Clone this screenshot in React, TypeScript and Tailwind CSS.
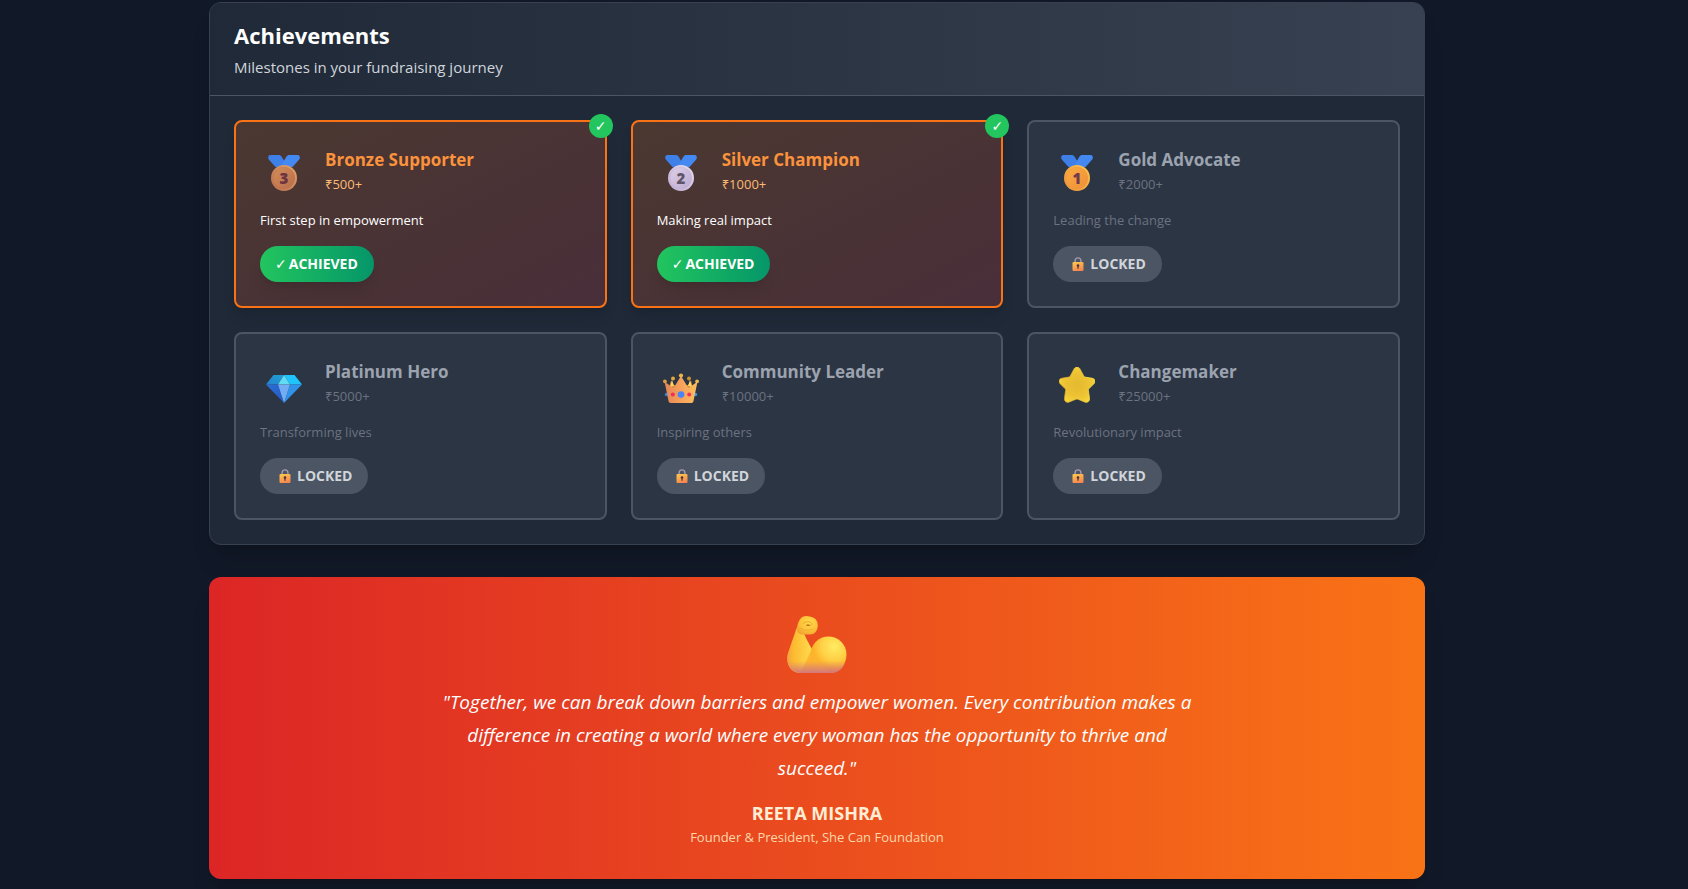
import type { ReactNode } from "react";

function Medal({ id, digit, rim, face, shade, ink }: { id: string; digit: string; rim: string; face: string; shade: string; ink: string }) {
  return (
    <svg viewBox="0 0 36 36" className="size-9" aria-hidden="true">
      <defs>
        <linearGradient id={id + "-face"} x1="0" y1="0" x2="1" y2="1">
          <stop offset="0" stopColor={face} />
          <stop offset="1" stopColor={shade} />
        </linearGradient>
        <linearGradient id={id + "-rim"} x1="1" y1="0" x2="0" y2="1">
          <stop offset="0" stopColor={rim} />
          <stop offset="1" stopColor={shade} />
        </linearGradient>
      </defs>
      <path d="M4.500 0h8c1.300 0 2.300.5 3 1.500L21 10.500l-4 3-7.500-1.500-6.700-7.500C1.500 2.800 2.300 0 4.500 0Z" fill="#3f7fe8" />
      <path d="M31.500 0h-8c-1.300 0-2.300.5-3 1.500L15.500 10l3.500 3.500 7.500-1.500 6.700-7.500C34.500 2.800 33.700 0 31.500 0Z" fill="#4489f2" />
      <circle cx="18" cy="23" r="13" fill={`url(#${id}-rim)`} />
      <circle cx="18" cy="23" r="10.800" fill={`url(#${id}-face)`} stroke={shade} strokeOpacity=".5" strokeWidth=".8" />
      <text x="18" y="28.500" textAnchor="middle" fontFamily="Open Sans, sans-serif" fontWeight="800" fontSize="15" fill={ink}>
        {digit}
      </text>
    </svg>
  );
}

function Gem() {
  return (
    <svg viewBox="0 0 36 36" className="size-9" aria-hidden="true">
      <defs>
        <linearGradient id="gem-tl" x1="0" y1="1" x2="1" y2="0">
          <stop offset="0" stopColor="#2583cf" />
          <stop offset="1" stopColor="#1fa0d4" />
        </linearGradient>
        <linearGradient id="gem-bl" x1="0" y1="0" x2="1" y2="1">
          <stop offset="0" stopColor="#2a6fd6" />
          <stop offset="1" stopColor="#2459c4" />
        </linearGradient>
      </defs>
      <path d="M7.500 8H18l-6 9.500H0Z" fill="url(#gem-tl)" />
      <path d="M18 8h10.500L36 17.500H24Z" fill="#1fc4fb" />
      <path d="M18 8l6 9.500H12Z" fill="#62dcf3" />
      <path d="M0 17.500h12L18 36Z" fill="url(#gem-bl)" />
      <path d="M36 17.500H24L18 36Z" fill="#2f93ea" />
      <path d="M12 17.500h12L18 36Z" fill="#72acf4" />
    </svg>
  );
}

function Crown() {
  return (
    <svg viewBox="0 -4 36 36" className="size-9" aria-hidden="true">
      <defs>
        <linearGradient id="crown-body" x1="0" y1="0" x2="1" y2="0">
          <stop offset="0" stopColor="#e28455" />
          <stop offset=".5" stopColor="#f7a15c" />
          <stop offset="1" stopColor="#fcbf5c" />
        </linearGradient>
      </defs>
      <path d="M8 9.500 6 17h24l-2-7.500-3 4.500h-4L18 8l-3 6h-4Z" fill="#c98b2b" />
      <circle cx="10" cy="7.500" r="2" fill="#e3a934" />
      <circle cx="26" cy="7.500" r="2" fill="#c9932c" />
      <path d="M9 9l2 6-4 1ZM27 9l-2 6 4 1Z" fill="#ffd36a" />
      <circle cx="3.500" cy="23.500" r="1.700" fill="#2f86e8" />
      <circle cx="32.500" cy="23.500" r="1.700" fill="#2f9bf5" />
      <path d="M1.500 10.500l8 6c.6.400 1.300.2 1.700-.4L18 5l6.800 11.100c.4.600 1.100.8 1.700.4l8-6-4 19.500c-.2 1.200-1 2-2.200 2H7.700c-1.200 0-2-.8-2.200-2Z" fill="url(#crown-body)" />
      <circle cx="18" cy="4.600" r="2.100" fill="#eeb544" />
      <circle cx="1.900" cy="10.300" r="1.900" fill="#dfa03c" />
      <circle cx="34.100" cy="10.300" r="1.900" fill="#f2b94a" />
      <circle cx="18" cy="23.600" r="3.300" fill="#4a83f5" />
      <circle cx="9.800" cy="23.600" r="2" fill="#ee2f56" />
      <circle cx="26.200" cy="23.600" r="2" fill="#f2335a" />
    </svg>
  );
}

function Star() {
  return (
    <svg viewBox="0 0 36 36" className="size-9" aria-hidden="true">
      <defs>
        <radialGradient id="star-face" cx=".5" cy=".5" r=".55">
          <stop offset="0" stopColor="#e3b92f" />
          <stop offset=".6" stopColor="#edc233" />
          <stop offset="1" stopColor="#f7d53a" />
        </radialGradient>
        <linearGradient id="star-edge" x1="0" y1="0" x2="1" y2="0">
          <stop offset="0" stopColor="#d9a02c" />
          <stop offset="1" stopColor="#fdea45" />
        </linearGradient>
      </defs>
      <path
        d="M15.200 1.700c1.200-2.200 4.400-2.200 5.600 0l4 7.500c.3.500.7.800 1.300.9l7.200 1.200c2.600.4 3.600 3.300 1.900 5.100l-5.400 5.400c-.4.400-.5.900-.4 1.500l1.100 8.200c.4 2.600-2 4.600-4.500 3.600l-6.900-2.900c-.7-.3-1.500-.3-2.200 0l-6.900 2.900c-2.500 1-4.900-1-4.500-3.600l1.100-8.200c.1-.6 0-1.100-.4-1.500L.8 16.400c-1.700-1.800-.7-4.700 1.900-5.100l7.200-1.200c.6-.1 1-.4 1.300-.9Z"
        fill="url(#star-face)"
        stroke="url(#star-edge)"
        strokeWidth=".8"
      />
    </svg>
  );
}

function Lock() {
  return (
    <svg viewBox="0 0 12 14" className="h-3.5 w-3" aria-hidden="true">
      <defs>
        <linearGradient id="lock-body" x1=".3" y1="0" x2=".7" y2="1">
          <stop offset="0" stopColor="#fcc44c" />
          <stop offset="1" stopColor="#f5824f" />
        </linearGradient>
      </defs>
      <path d="M3.100 6V3.800a2.900 2.900 0 0 1 5.800 0V6" fill="none" stroke="#a59aae" strokeWidth="1.400" />
      <rect x=".5" y="5" width="11" height="9" rx="1" fill="url(#lock-body)" />
      <circle cx="6" cy="8.500" r="1.300" fill="#4b3044" />
      <path d="M5.400 9h1.200v2.700H5.400Z" fill="#4b3044" />
    </svg>
  );
}

function Biceps() {
  return (
    <svg viewBox="0 0 60 58" className="h-[58px] w-[60px]" aria-hidden="true">
      <defs>
        <linearGradient id="arm-base" x1="0" y1="0" x2="0" y2="1">
          <stop offset="0" stopColor="#fdbb2e" />
          <stop offset=".7" stopColor="#fba93a" />
          <stop offset=".88" stopColor="#f59654" />
          <stop offset="1" stopColor="#d97c78" />
        </linearGradient>
        <linearGradient id="arm-fore" x1="0" y1="0" x2="1" y2="0">
          <stop offset="0" stopColor="#f3a13f" />
          <stop offset=".25" stopColor="#fdba2f" />
          <stop offset="1" stopColor="#ffdc4f" />
        </linearGradient>
        <radialGradient id="arm-ball" cx=".66" cy=".28" r=".75">
          <stop offset="0" stopColor="#ffec62" />
          <stop offset=".5" stopColor="#ffcf45" />
          <stop offset=".85" stopColor="#fdad25" />
          <stop offset="1" stopColor="#f39b42" />
        </radialGradient>
        <radialGradient id="arm-fist" cx=".6" cy=".35" r=".7">
          <stop offset="0" stopColor="#ffd94d" />
          <stop offset=".6" stopColor="#fdc43a" />
          <stop offset="1" stopColor="#f2a432" />
        </radialGradient>
        <linearGradient id="arm-shade" x1="0" y1="0" x2="0" y2="1">
          <stop offset=".74" stopColor="#d97c78" stopOpacity="0" />
          <stop offset="1" stopColor="#d4777c" />
        </linearGradient>
      </defs>
      <path d="M10.500 14 1 38C-1.500 49 4 57 14 57h29c10 0 16-7 16-18L40 24 25 33Z" fill="url(#arm-base)" />
      <path d="M10 11 1 37C-2 48 4 57 13 57c4-5 8-12 12-23-1.800-5-5-9-7.500-15.500Z" fill="url(#arm-fore)" />
      <circle cx="41.500" cy="38.500" r="18" fill="url(#arm-ball)" />
      <path d="M24.500 33.500 42 57H13Z" fill="#fdb52f" fillOpacity=".85" />
      <path
        d="M10 11 1 37C-2 48 4 57 14 57h29c10 0 16.500-7 16.500-18.500C59.500 28.500 51 20.500 41.500 20.500c-7.500 0-14 5-16.500 12L17 18Z"
        fill="url(#arm-shade)"
      />
      <path d="M10 12C11 4.500 14 0 19.500 0c2 0 4.500.7 7 1.800 3 1.400 4.300 4.400 4.300 7.700 0 5-3 9-7.300 9H15c-3 0-5.500-2.500-5-6.500Z" fill="url(#arm-fist)" />
      <path d="M16 7.500c2-2 5-2.200 7.500-1.200 2 1 2 3-1 3.400" fill="none" stroke="#eba62c" strokeWidth="1" strokeLinecap="round" />
      <path d="M20 9.300h2" stroke="#b56b1d" strokeWidth="1.400" strokeLinecap="round" />
      <path d="M13 12c3 2.500 8 3 13 1" fill="none" stroke="#eda52e" strokeOpacity=".6" strokeWidth="1.200" strokeLinecap="round" />
    </svg>
  );
}

type Achievement = { title: string; amount: string; text: string; achieved: boolean; icon: ReactNode };

const achievements: Achievement[] = [
  {
    title: "Bronze Supporter",
    amount: "₹500+",
    text: "First step in empowerment",
    achieved: true,
    icon: <Medal id="bronze" digit="3" rim="#e6a56c" face="#d28d57" shade="#b96e4d" ink="#6b3443" />,
  },
  {
    title: "Silver Champion",
    amount: "₹1000+",
    text: "Making real impact",
    achieved: true,
    icon: <Medal id="silver" digit="2" rim="#e8dfef" face="#dccfe6" shade="#bfabd3" ink="#5f5468" />,
  },
  {
    title: "Gold Advocate",
    amount: "₹2000+",
    text: "Leading the change",
    achieved: false,
    icon: <Medal id="gold" digit="1" rim="#fcc94d" face="#fbab40" shade="#ee8f3a" ink="#713a4d" />,
  },
  { title: "Platinum Hero", amount: "₹5000+", text: "Transforming lives", achieved: false, icon: <Gem /> },
  { title: "Community Leader", amount: "₹10000+", text: "Inspiring others", achieved: false, icon: <Crown /> },
  { title: "Changemaker", amount: "₹25000+", text: "Revolutionary impact", achieved: false, icon: <Star /> },
];

function AchievementCard({ title, amount, text, achieved, icon }: Achievement) {
  return (
    <li
      className={
        achieved
          ? "relative rounded-lg border-2 border-[#f97316] bg-linear-to-br/srgb from-[#f97316]/20 to-[#ef4444]/20 p-6 shadow-lg"
          : "relative rounded-lg border-2 border-[#4b5563] bg-[#374151]/50 p-6"
      }
    >
      {achieved && (
        <span className="absolute -top-2 -right-2 flex size-6 items-center justify-center rounded-full bg-[#22c55e] font-['DejaVu_Sans'] text-sm text-white">
          ✓
        </span>
      )}
      <div className="flex items-center gap-[17px]">
        <div className="flex w-12 justify-center pt-1.5">{icon}</div>
        <div>
          <h3 className={achieved ? "text-[17px] leading-7 font-bold text-[#fb923c]" : "text-[17px] leading-7 font-bold text-[#9ca3af]"}>{title}</h3>
          <p className={achieved ? "text-[13px] leading-5 text-[#fdba74]" : "text-[13px] leading-5 text-[#6b7280]"}>{amount}</p>
        </div>
      </div>
      <p className={achieved ? "mt-4 text-[13px] leading-5 text-white" : "mt-4 text-[13px] leading-5 text-[#6b7280]"}>{text}</p>
      {achieved ? (
        <span className="mt-4 inline-flex items-center gap-0.5 rounded-full bg-linear-to-r/srgb from-[#22c55e] to-[#059669] pr-4 pl-[15px] py-2 align-top text-sm leading-5 font-bold text-white shadow-lg">
          <span className="font-['DejaVu_Sans'] text-sm leading-5 font-bold">✓</span>
          ACHIEVED
        </span>
      ) : (
        <span className="mt-4 inline-flex items-center gap-1.5 rounded-full bg-[#4b5563] py-2 pr-4 pl-[19px] align-top text-sm leading-5 font-bold text-[#d1d5db]">
          <Lock />
          LOCKED
        </span>
      )}
    </li>
  );
}

export default function App() {
  return (
    <div className="min-h-screen bg-[#111827] pr-[54px] font-['Open_Sans','Noto_Sans',sans-serif]">
      <main className="mx-auto flex max-w-7xl flex-col gap-8 px-8 pt-0.5 pb-2">
        <section className="overflow-hidden rounded-xl border border-[#374151] bg-[#1f2937] shadow-xl">
          <header className="border-b border-[#4b5563] bg-linear-to-r/srgb from-[#1f2937] to-[#374151] px-6 py-4">
            <h2 className="text-[22px] leading-8 font-bold text-white">Achievements</h2>
            <p className="mt-1 text-[15px] leading-6 text-[#d1d5db]">Milestones in your fundraising journey</p>
          </header>
          <ul className="grid grid-cols-1 gap-6 p-6 md:grid-cols-2 lg:grid-cols-3">
            {achievements.map((item) => (
              <AchievementCard key={item.title} {...item} />
            ))}
          </ul>
        </section>

        <section className="rounded-xl bg-linear-to-r/srgb from-[#dc2626] to-[#f97316] p-8 text-center shadow-xl">
          <div className="mb-4 flex h-[61px] items-end justify-center">
            <div className="-mb-1">
              <Biceps />
            </div>
          </div>
          <blockquote className="mx-auto mb-3.5 max-w-3xl text-[19px] leading-[33px] text-white italic">
            "Together, we can break down barriers and empower women. Every contribution makes a difference in creating a world where every woman has
            the opportunity to thrive and succeed."
          </blockquote>
          <p className="text-lg leading-7 font-bold text-[#ffedd5]">REETA MISHRA</p>
          <p className="text-[13px] leading-5 text-[#fed7aa]">Founder &amp; President, She Can Foundation</p>
        </section>
      </main>
    </div>
  );
}
